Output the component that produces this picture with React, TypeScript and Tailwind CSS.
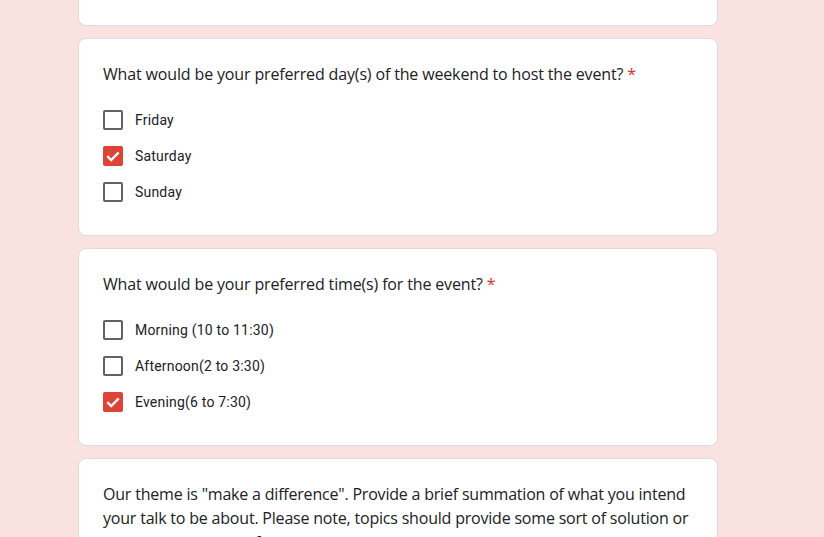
import React from "react";

type Option = { label: string; checked?: boolean };

function Checkbox({ checked }: { checked?: boolean }) {
  if (checked) {
    return (
      <span className="flex h-5 w-5 shrink-0 items-center justify-center rounded-[2px] bg-[#db4437]">
        <svg viewBox="0 0 20 20" className="h-5 w-5 shrink-0" fill="none">
          <path d="M4.3 10.1l3.9 3.9 7.5-7.6" stroke="white" strokeWidth="2.3" />
        </svg>
      </span>
    );
  }
  return <span className="h-5 w-5 shrink-0 rounded-[2px] border-2 border-[#5f6368]" />;
}

function Question({ title, options }: { title: string; options: Option[] }) {
  return (
    <div className="rounded-lg border border-[#dadce0] bg-white px-6 pt-[23px] pb-[25px]">
      <div className="font-['Open_Sans',sans-serif] text-base leading-6 tracking-[-0.15px] text-[#202124]">
        {title} <span className="text-[#d93025]">*</span>
      </div>
      <div className="mt-4 flex flex-col">
        {options.map((o) => (
          <label key={o.label} className="flex h-9 items-center gap-3">
            <Checkbox checked={o.checked} />
            <span className="font-['Roboto',sans-serif] text-sm tracking-[0.2px] text-[#202124]">{o.label}</span>
          </label>
        ))}
      </div>
    </div>
  );
}

export default function App() {
  return (
    <div className="h-[537px] w-full overflow-hidden bg-[#fae2e1]">
      <div className="ml-[78px] flex w-[640px] flex-col gap-3">
        <div className="h-[26px] rounded-b-lg border border-t-0 border-[#dadce0] bg-white" />
        <Question
          title="What would be your preferred day(s) of the weekend to host the event?"
          options={[{ label: "Friday" }, { label: "Saturday", checked: true }, { label: "Sunday" }]}
        />
        <Question
          title="What would be your preferred time(s) for the event?"
          options={[
            { label: "Morning (10 to 11:30)" },
            { label: "Afternoon(2 to 3:30)" },
            { label: "Evening(6 to 7:30)", checked: true },
          ]}
        />
        <div className="rounded-lg border border-[#dadce0] bg-white px-6 pt-[23px] pb-6">
          <p className="font-['Open_Sans',sans-serif] text-base leading-6 tracking-[-0.2px] text-[#202124]">
            Our theme is "make a difference". Provide a brief summation of what you intend your talk to be
            about. Please note, topics should provide some sort of solution or answer or a means of progress.
          </p>
        </div>
      </div>
    </div>
  );
}
